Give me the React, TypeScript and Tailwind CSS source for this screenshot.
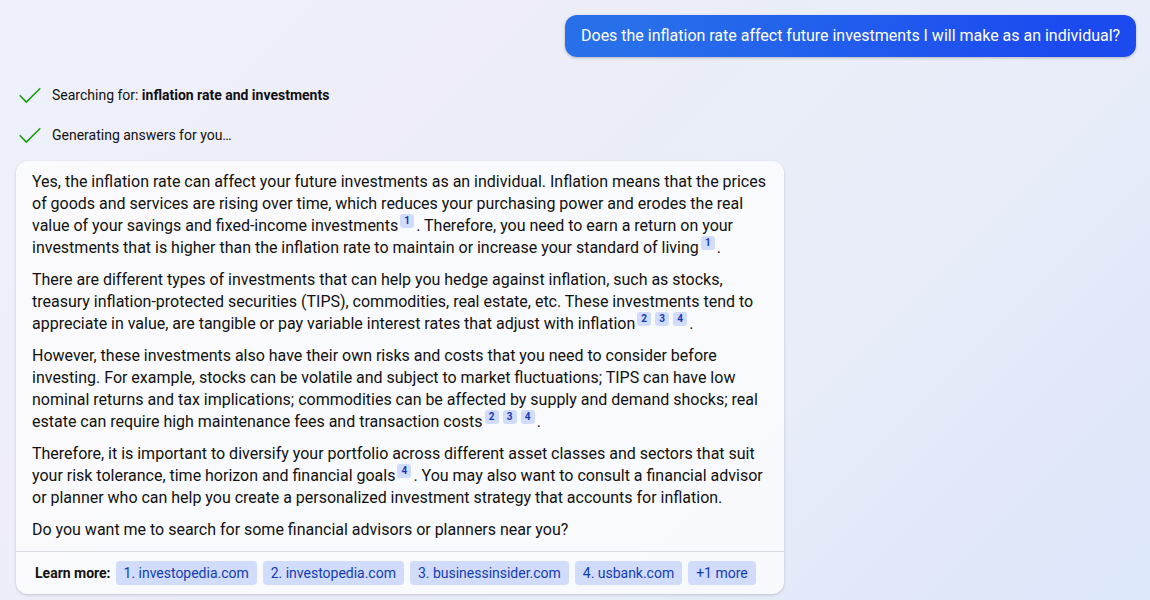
import React from 'react';

interface StatusRowProps {
  children: React.ReactNode;
}

const sources = ['1. investopedia.com', '2. investopedia.com', '3. businessinsider.com', '4. usbank.com', '+1 more'];

export default function App() {
  return (
    <main className="h-[600px] w-[1150px] overflow-hidden bg-[linear-gradient(135deg,#eef1fa_0%,#eeedf8_30%,#e9eef9_50%,#e8edf9_66%,#e2e8f8_84%,#dbe7f9_100%)] font-['Roboto',sans-serif] text-[#111111] [word-spacing:-0.05px]">
      {/* User message */}
      <div className="flex justify-end pt-[15px] pr-[14px]">
        <div className="flex h-[42px] w-[571px] items-center rounded-xl bg-[linear-gradient(100deg,#2870ea_10.79%,#1b4aef_87.08%)] px-4 text-base whitespace-nowrap text-white shadow-[0_1px_3px_rgba(0,0,0,0.25)]">
          Does the inflation rate affect future investments I will make as an individual?
        </div>
      </div>

      {/* Progress */}
      <div className="mt-[18px] mb-[6px] pl-[18px]">
        <StatusRow>
          Searching for: <strong className="font-bold">inflation rate and investments</strong>
        </StatusRow>
        <StatusRow>Generating answers for you…</StatusRow>
      </div>

      {/* Answer */}
      <section className="ml-4 h-[433px] w-[768px] rounded-xl bg-white/70 shadow-[0_1px_3px_rgba(0,0,0,0.18)]">
        <div className="flex h-[390px] flex-col gap-[10px] px-4 pt-[10px] text-base leading-[22px]">
          <p>
            Yes, the inflation rate can affect your future investments as an individual. Inflation means that the prices
            of goods and services are rising over time, which reduces your purchasing power and erodes the real value of
            your savings and fixed-income investments<Cite n={1} />. Therefore, you need to earn a return on your
            investments that is higher than the inflation rate to maintain or increase your standard of living
            <Cite n={1} />.
          </p>
          <p>
            There are different types of investments that can help you hedge against inflation, such as stocks, treasury
            inflation-protected securities (TIPS), commodities, real estate, etc. These investments tend to appreciate
            in value, are tangible or pay variable interest rates that adjust with inflation
            <Cite n={2} /><Cite n={3} /><Cite n={4} />.
          </p>
          <p>
            However, these investments also have their own risks and costs that you need to consider before investing.
            For example, stocks can be volatile and subject to market fluctuations; TIPS can have low nominal returns
            and tax implications; commodities can be affected by supply and demand shocks; real estate can require high
            maintenance fees and transaction costs<Cite n={2} /><Cite n={3} /><Cite n={4} />.
          </p>
          <p>
            Therefore, it is important to diversify your portfolio across different asset classes and sectors that suit
            your risk tolerance, time horizon and financial goals<Cite n={4} />. You may also want to consult a
            financial advisor or planner who can help you create a personalized investment strategy that accounts for
            inflation.
          </p>
          <p>Do you want me to search for some financial advisors or planners near you?</p>
        </div>

        <div className="flex h-[43px] items-center gap-[6px] border-t border-[#d9dbe3] pl-[19px] text-sm">
          <span className="-mr-px font-bold">Learn more:</span>
          {sources.map((source) => (
            <a key={source} className="flex h-6 items-center rounded bg-[#d1dbfa] px-2 tracking-[-0.01px] text-[#123bb6]">
              {source}
            </a>
          ))}
        </div>
      </section>
    </main>
  );
}

function StatusRow({ children }: StatusRowProps) {
  return (
    <div className="flex h-10 items-center gap-[10px] text-sm">
      <svg className="h-6 w-6" viewBox="0 0 24 24" fill="none" stroke="#13a10e" strokeWidth="1.6">
        <path d="M1.7 12.3 8.3 19 22.3 5.2" />
      </svg>
      <span>{children}</span>
    </div>
  );
}

function Cite({ n }: { n: number }) {
  return (
    <sup className="top-0 mx-[2px] inline-flex h-[14px] w-[14px] -translate-y-[6px] items-center justify-center rounded-[3px] bg-[#d1dbfa] align-middle text-[10px] leading-none font-bold text-[#123bb6]">
      {n}
    </sup>
  );
}
